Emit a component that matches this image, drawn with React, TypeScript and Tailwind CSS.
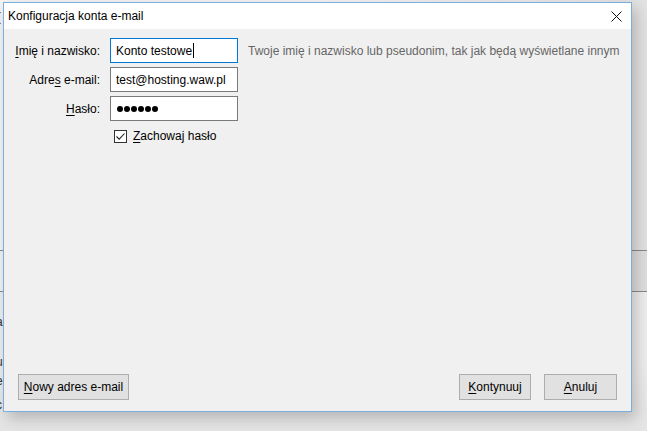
import React from 'react';

const font = { fontFamily: '"Liberation Sans", Arial, sans-serif' };

// access-key letter, underlined like in Windows dialogs
const Key: React.FC<{ children: React.ReactNode }> = ({ children }) => (
  <span className="underline underline-offset-2">{children}</span>
);

const Field: React.FC<{ focused?: boolean; children: React.ReactNode }> = ({ focused, children }) => (
  <div className={`h-[25px] w-[128px] bg-white border flex items-center pl-[5px] ${focused ? 'border-[#0078d7]' : 'border-[#7a7a7a]'}`}>
    {children}
  </div>
);

const Button: React.FC<{ width: string; children: React.ReactNode }> = ({ width, children }) => (
  <div className={`h-[26px] ${width} bg-[#e1e1e1] border border-[#adadad] flex items-center justify-center text-[12px] text-black`}>
    {children}
  </div>
);

export default function App() {
  return (
    <div className="relative w-[647px] h-[431px] overflow-hidden bg-[#efefef]" style={font}>
      {/* window behind the dialog */}
      <div className="flex flex-col h-full">
        <div className="h-[250px] bg-gradient-to-r from-[#f4f4f4] via-[#f4f4f4] to-[#e2e2e2]" />
        <div className="h-[1px] bg-[#8a8a8a]" />
        <div className="h-[40px] bg-gradient-to-r from-[#f2f2f2] via-[#f2f2f2] to-[#dedede]" />
        <div className="h-[1px] bg-[#8a8a8a]" />
        <div className="flex-1 bg-gradient-to-b from-[#eeeeee] via-[#eeeeee] to-[#e4e4e4]" />
      </div>
      <span className="absolute left-[-3px] top-[8px] text-[12px] text-[#7a1f1f]">(</span>
      <span className="absolute left-[-4px] top-[313px] text-[12px] text-[#333]">a</span>
      <span className="absolute left-[-4px] top-[353px] text-[12px] text-[#333]">u</span>
      <span className="absolute left-[-4px] top-[372px] text-[12px] text-[#333]">e</span>
      <span className="absolute left-[-4px] top-[396px] text-[12px] text-[#333]">c</span>

      {/* dialog window */}
      <div className="absolute left-[3px] top-[2px] w-[629px] h-[410px] border border-[#78aee0] bg-[#f0f0f0] flex flex-col shadow-[4px_6px_14px_rgba(0,0,0,0.22)]">
        <div className="h-[26px] bg-white flex items-center justify-between pl-[4px] pr-[9px] flex-shrink-0">
          <span className="text-[12px] text-black">Konfiguracja konta e-mail</span>
          <svg width="11" height="11" viewBox="0 0 11 11" className="mt-[1px]">
            <path d="M0.5 0.5 L10.5 10.5 M10.5 0.5 L0.5 10.5" stroke="#111" strokeWidth="1" />
          </svg>
        </div>

        <main className="flex-1 pt-[9px]">
          <div className="grid grid-cols-[97px_128px_1fr] gap-x-[9px] gap-y-[4px] items-center text-[12px] text-black">
            <label className="text-right pr-[1px]"><Key>I</Key>mię i nazwisko:</label>
            <Field focused>
              <span>Konto testowe</span>
              <span className="w-[1px] h-[15px] bg-black ml-[1px]" />
            </Field>
            <span className="text-[#666666] pl-[1px] whitespace-nowrap">Twoje imię i nazwisko lub pseudonim, tak jak będą wyświetlane innym</span>

            <label className="text-right pr-[1px]">Adre<Key>s</Key> e-mail:</label>
            <Field><span>test@hosting.waw.pl</span></Field>
            <span />

            <label className="text-right pr-[1px]"><Key>H</Key>asło:</label>
            <Field>
              <div className="flex gap-[1px] pl-[1px]">
                {[0, 1, 2, 3, 4, 5].map(i => (
                  <span key={i} className="w-[6px] h-[6px] rounded-full bg-black" />
                ))}
              </div>
            </Field>
            <span />
          </div>

          <div className="flex items-center ml-[110px] mt-[6px] text-[12px] text-black">
            <div className="w-[13px] h-[13px] border border-[#333] bg-white flex items-center justify-center">
              <svg width="11" height="11" viewBox="0 0 11 11">
                <path d="M1.5 5.5 L4.2 8.2 L9.5 2.5" stroke="#222" strokeWidth="1.1" fill="none" />
              </svg>
            </div>
            <span className="ml-[6px]"><Key>Z</Key>achowaj hasło</span>
          </div>
        </main>

        <footer className="flex items-center justify-between pl-[14px] pr-[14px] pb-[11px] flex-shrink-0">
          <Button width="w-[111px]"><Key>N</Key>owy adres e-mail</Button>
          <div className="flex gap-[13px]">
            <Button width="w-[72px]"><Key>K</Key>ontynuuj</Button>
            <Button width="w-[73px]"><Key>A</Key>nuluj</Button>
          </div>
        </footer>
      </div>
    </div>
  );
}
